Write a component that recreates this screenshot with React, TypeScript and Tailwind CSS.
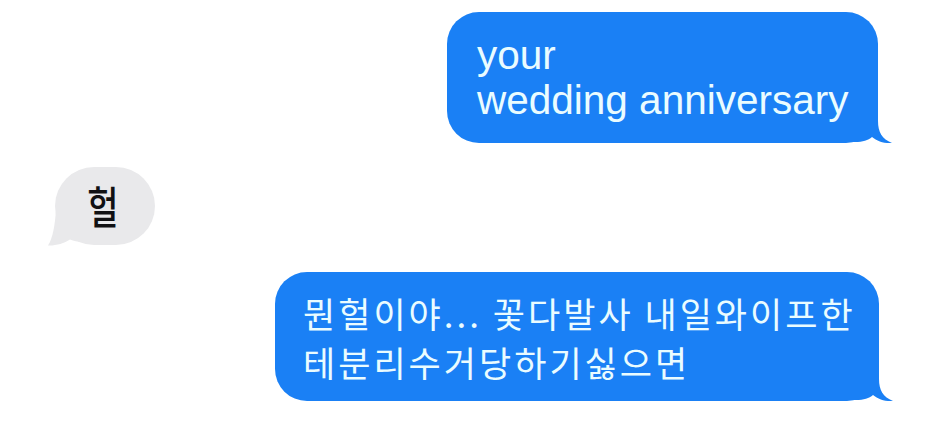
import React from "react";

const BLUE = "#1a80f5";

function RightTail() {
  return (
    <svg
      className="absolute right-[-16px] bottom-[-1px]"
      width="50"
      height="35"
      viewBox="0 0 50 35"
    >
      <path
        d="M34 0 L34 12 C34 23 38 30 48 34 C40 34.6 33 32.2 28 28 C24 31.4 19 33 11 33 L0 33 L0 0 Z"
        fill={BLUE}
      />
    </svg>
  );
}

function LeftTail() {
  return (
    <svg
      className="absolute left-[-8px] bottom-[-2px]"
      width="42"
      height="37"
      viewBox="0 0 42 37"
    >
      <path
        d="M9 0 C8 14 6 28 1 35.5 C9 35.8 17 33.5 23 29.5 C28 31.5 34 32.5 41 31.5 L41 0 Z"
        fill="#e9e9eb"
      />
    </svg>
  );
}

export default function App() {
  return (
    <div className="w-[941px] h-[436px] bg-white flex flex-col pt-[12px] overflow-hidden">
      <div
        className="relative self-end mr-[63px] w-[431px] h-[131px] rounded-[32px] bg-[#1a80f5] flex items-center pl-[30px] text-[#eafcff] text-[40.5px] leading-[45px] whitespace-nowrap"
        style={{ fontFamily: '"Liberation Sans", Arial, sans-serif' }}
      >
        <div className="relative z-10">
          your
          <br />
          wedding anniversary
        </div>
        <RightTail />
      </div>

      <div className="relative mt-[24px] ml-[55px] w-[100px] h-[78px] rounded-full bg-[#e9e9eb] flex items-center justify-center">
        <LeftTail />
        <span
          className="relative z-10 text-[34px] leading-none font-medium text-[#111113] scale-y-130 -mt-[1px] -ml-[4px]"
          style={{ fontFamily: '"Noto Sans CJK KR", "Noto Sans", sans-serif' }}
        >
          헐
        </span>
      </div>

      <div
        className="relative mt-[27px] self-end mr-[62px] w-[604px] h-[129px] rounded-[32px] bg-[#1a80f5] flex items-center pl-[28px] text-[#eafcff] text-[35px] leading-[49px] tracking-[3px] whitespace-nowrap"
        style={{ fontFamily: '"Noto Sans CJK KR", "Noto Sans", sans-serif' }}
      >
        <div className="relative z-10">
          뭔헐이야... 꽃다발사 내일와이프한
          <br />
          테분리수거당하기싫으면
        </div>
        <RightTail />
      </div>
    </div>
  );
}
